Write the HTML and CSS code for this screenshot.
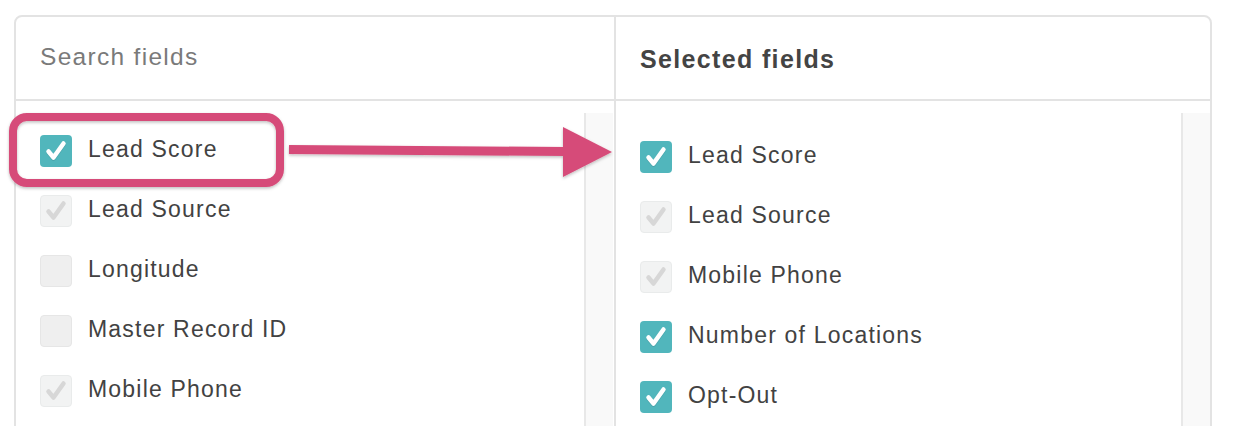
FILE: index.html
```html
<!DOCTYPE html>
<html>
<head>
<meta charset="utf-8">
<link rel="stylesheet" href="styles.css">
</head>
<body>
<div class="wrap">
  <div class="panel">
    <div class="col col-left">
      <div class="head"><span class="search">Search fields</span></div>
      <div class="body">
        <ul class="list list-left">
          <li class="item"><span class="cb on"><svg viewBox="0 0 32 32"><path class="sh" d="M8.5 17.5 L13.5 23.5 L23.5 9.5"/><path d="M8.5 16.5 L13.5 22.5 L23.5 8.5"/></svg></span><span class="lbl">Lead Score</span></li>
          <li class="item"><span class="cb dis"><svg viewBox="0 0 32 32"><path d="M8.5 16.5 L13.5 22.5 L23.5 8.5"/></svg></span><span class="lbl">Lead Source</span></li>
          <li class="item"><span class="cb off"></span><span class="lbl">Longitude</span></li>
          <li class="item"><span class="cb off"></span><span class="lbl">Master Record ID</span></li>
          <li class="item"><span class="cb dis"><svg viewBox="0 0 32 32"><path d="M8.5 16.5 L13.5 22.5 L23.5 8.5"/></svg></span><span class="lbl">Mobile Phone</span></li>
        </ul>
        <div class="track"></div>
      </div>
    </div>
    <div class="col col-right">
      <div class="head"><span class="title">Selected fields</span></div>
      <div class="body">
        <ul class="list list-right">
          <li class="item"><span class="cb on"><svg viewBox="0 0 32 32"><path class="sh" d="M8.5 17.5 L13.5 23.5 L23.5 9.5"/><path d="M8.5 16.5 L13.5 22.5 L23.5 8.5"/></svg></span><span class="lbl">Lead Score</span></li>
          <li class="item"><span class="cb dis"><svg viewBox="0 0 32 32"><path d="M8.5 16.5 L13.5 22.5 L23.5 8.5"/></svg></span><span class="lbl">Lead Source</span></li>
          <li class="item"><span class="cb dis"><svg viewBox="0 0 32 32"><path d="M8.5 16.5 L13.5 22.5 L23.5 8.5"/></svg></span><span class="lbl">Mobile Phone</span></li>
          <li class="item"><span class="cb on"><svg viewBox="0 0 32 32"><path class="sh" d="M8.5 17.5 L13.5 23.5 L23.5 9.5"/><path d="M8.5 16.5 L13.5 22.5 L23.5 8.5"/></svg></span><span class="lbl">Number of Locations</span></li>
          <li class="item"><span class="cb on"><svg viewBox="0 0 32 32"><path class="sh" d="M8.5 17.5 L13.5 23.5 L23.5 9.5"/><path d="M8.5 16.5 L13.5 22.5 L23.5 8.5"/></svg></span><span class="lbl">Opt-Out</span></li>
        </ul>
        <div class="track"></div>
      </div>
    </div>
  </div>
</div>
<svg class="annot" width="1240" height="426" viewBox="0 0 1240 426">
  <defs>
    <filter id="ds" x="-10%" y="-30%" width="120%" height="160%">
      <feDropShadow dx="0" dy="1.5" stdDeviation="1.5" flood-color="#000" flood-opacity="0.25"/>
    </filter>
  </defs>
  <g filter="url(#ds)" fill="none" stroke="#d64b79">
    <rect x="13" y="117" width="267" height="66" rx="14" ry="14" stroke-width="8"/>
    <line x1="289" y1="149.5" x2="567" y2="151.5" stroke-width="9"/>
    <polygon points="563,127 612,152 563,177" fill="#d64b79" stroke="none"/>
  </g>
</svg>
</body>
</html>
```
FILE: styles.css
```css
html, body {
  margin: 0;
  padding: 0;
  background: #ffffff;
  overflow: hidden;
}
body {
  width: 1240px;
  height: 426px;
  position: relative;
  font-family: "Liberation Sans", Arial, sans-serif;
  color: #444;
}
.wrap {
  padding: 15px 0 0 14px;
}
.panel {
  width: 1198px;
  height: 520px;
  box-sizing: border-box;
  border: 2px solid #e3e3e3;
  border-radius: 8px;
  display: grid;
  grid-template-columns: 600px 1fr;
}
.col {
  display: flex;
  flex-direction: column;
  min-width: 0;
}
.col-left {
  border-right: 2px solid #e3e3e3;
}
.head {
  height: 82px;
  border-bottom: 2px solid #e3e3e3;
  display: flex;
  align-items: center;
  padding-left: 24px;
}
.search {
  font-size: 24.5px;
  letter-spacing: 1.3px;
  color: #7a7a7a;
  margin-top: -3px;
}
.title {
  font-size: 25px;
  font-weight: bold;
  letter-spacing: 1.35px;
  color: #444;
  margin-top: 2px;
}
.body {
  flex: 1;
  display: flex;
}
.list {
  list-style: none;
  margin: 0;
  padding: 20px 0 0 24px;
  flex: 1;
}
.list-right {
  padding-top: 26px;
}
.item {
  height: 60px;
  display: flex;
  align-items: center;
  gap: 16px;
}
.lbl {
  font-size: 23px;
  letter-spacing: 1.2px;
  color: #424242;
  margin-top: -3px;
}
.cb {
  width: 32px;
  height: 32px;
  box-sizing: border-box;
  border-radius: 4px;
  display: block;
  flex: none;
}
.cb svg {
  display: block;
  width: 32px;
  height: 32px;
}
.cb svg path {
  fill: none;
  stroke-width: 4.5;
  stroke-linecap: round;
  stroke-linejoin: round;
}
.cb.on {
  background: #51b6bc;
}
.cb.on svg path {
  stroke: #ffffff;
}
.cb.on svg path.sh {
  stroke: #3f8f94;
  opacity: 0.45;
}
.cb.dis {
  background: #f2f3f3;
  border: 1px solid #e9ebeb;
}
.cb.dis svg {
  margin: -1px;
}
.cb.dis svg path {
  stroke: #d7d7d7;
}
.cb.off {
  background: #efefef;
  border: 1px solid #e6e6e6;
}
.track {
  width: 27px;
  margin-top: 12px;
  border-left: 2px solid #e8e8e8;
  background: #f9f9f9;
  flex: none;
}
.col-left .track {
  margin-right: 1px;
}
.annot {
  position: absolute;
  left: 0;
  top: 0;
  pointer-events: none;
}
```
